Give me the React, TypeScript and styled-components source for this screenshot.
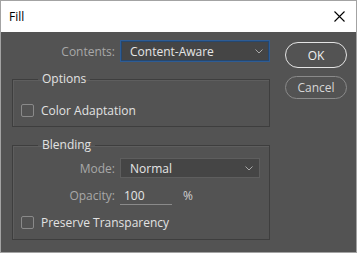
import styled, { createGlobalStyle } from 'styled-components';

const GlobalStyle = createGlobalStyle`
  html, body {
    margin: 0;
    padding: 0;
    background: #ffffff;
  }
  * {
    box-sizing: border-box;
  }
`;

const Window = styled.div`
  width: 357px;
  height: 253px;
  border: 1px solid #a3a3a3;
  display: flex;
  flex-direction: column;
  font-family: 'Open Sans', 'Noto Sans', sans-serif;
  font-size: 12px;
  overflow: hidden;
`;

const TitleBar = styled.div`
  height: 31px;
  flex: none;
  background: #ffffff;
  display: flex;
  align-items: center;
  justify-content: space-between;
  padding: 0 10px 0 8px;
`;

const Title = styled.span`
  font-size: 12px;
  color: #000000;
`;

const CloseButton = styled.button`
  width: 14px;
  height: 14px;
  padding: 0;
  border: none;
  background: transparent;
  display: flex;
  align-items: center;
  justify-content: center;
`;

const Body = styled.div`
  flex: 1;
  background: #535353;
  display: flex;
  padding: 8px 0 0 11px;
  gap: 15px;
`;

const MainColumn = styled.div`
  width: 258px;
  display: flex;
  flex-direction: column;
`;

const ButtonColumn = styled.div`
  width: 62px;
  padding-top: 2px;
  display: flex;
  flex-direction: column;
  gap: 8px;
`;

const DialogButton = styled.button<{ $primary?: boolean }>`
  border-radius: 13px;
  background: transparent;
  border: ${({ $primary }) => ($primary ? '1.5px solid #e4e4e4' : '1px solid #8a8a8a')};
  color: ${({ $primary }) => ($primary ? '#f0f0f0' : '#d6d6d6')};
  font-family: inherit;
  font-size: 12px;
  padding: 0;
  height: ${({ $primary }) => ($primary ? '26px' : '23px')};
`;

const Row = styled.div<{ $height: number; $top?: number }>`
  display: flex;
  align-items: center;
  height: ${({ $height }) => $height}px;
  margin-top: ${({ $top = 0 }) => $top}px;
`;

const Label = styled.span<{ $width: number }>`
  width: ${({ $width }) => $width}px;
  text-align: right;
  color: #a8a8a8;
  font-size: 12px;
  padding-right: 5px;
  flex: none;
`;

const Select = styled.div<{ $width: number; $focused?: boolean }>`
  width: ${({ $width }) => $width}px;
  height: 100%;
  background: #454545;
  border: 1px solid ${({ $focused }) => ($focused ? '#2e5c94' : '#5e5e5e')};
  box-shadow: ${({ $focused }) => ($focused ? 'inset 0 0 0 1px #26476e' : 'none')};
  display: flex;
  align-items: center;
  justify-content: space-between;
  padding: 0 6px 0 9px;
  color: #e6e6e6;
  font-size: 12px;
`;

const Group = styled.fieldset<{ $height: number; $top: number }>`
  margin: ${({ $top }) => $top}px 0 0;
  height: ${({ $height }) => $height}px;
  border: 1px solid #3e3e3e;
  box-shadow: 1px 1px 0 #5e5e5e inset;
  padding: 0 0 0 8px;
  display: flex;
  flex-direction: column;
`;

const Legend = styled.legend`
  color: #e2e2e2;
  font-size: 12px;
  line-height: 16px;
  padding: 0 4px;
  margin-left: 17px;
`;

const CheckRow = styled.label`
  display: flex;
  align-items: center;
  gap: 7px;
  color: #e2e2e2;
  font-size: 12px;
`;

const Box = styled.span`
  width: 13px;
  height: 13px;
  border: 1px solid #8a8a8a;
  border-radius: 2px;
  flex: none;
`;

const NumberField = styled.div`
  width: 52px;
  height: 100%;
  border-bottom: 1px solid #8a8a8a;
  color: #e6e6e6;
  font-size: 12px;
  display: flex;
  align-items: center;
  padding: 2px 0 0 4px;
`;

const Unit = styled.span`
  color: #cfcfcf;
  font-size: 12px;
  margin-left: 11px;
`;

const Chevron = () => (
  <svg width="8" height="5" viewBox="0 0 8 5">
    <path d="M0.5 0.5 L4 4 L7.5 0.5" fill="none" stroke="#a8a8a8" strokeWidth="1" />
  </svg>
);

export default function App() {
  return (
    <>
      <GlobalStyle />
      <Window>
        <TitleBar>
          <Title>Fill</Title>
          <CloseButton aria-label="Close">
            <svg width="11" height="11" viewBox="0 0 11 11">
              <path d="M0.5 0.5 L10.5 10.5 M10.5 0.5 L0.5 10.5" stroke="#000" strokeWidth="1.1" />
            </svg>
          </CloseButton>
        </TitleBar>
        <Body>
          <MainColumn>
            <Row $height={22}>
              <Label $width={108}>Contents:</Label>
              <Select $width={150} $focused>
                Content-Aware
                <Chevron />
              </Select>
            </Row>
            <Group $height={56} $top={9}>
              <Legend>Options</Legend>
              <Row $height={20} $top={13}>
                <CheckRow>
                  <Box />
                  Color Adaptation
                </CheckRow>
              </Row>
            </Group>
            <Group $height={103} $top={10}>
              <Legend>Blending</Legend>
              <Row $height={20} $top={5}>
                <Label $width={99}>Mode:</Label>
                <Select $width={140}>
                  Normal
                  <Chevron />
                </Select>
              </Row>
              <Row $height={20} $top={7}>
                <Label $width={99}>Opacity:</Label>
                <NumberField>100</NumberField>
                <Unit>%</Unit>
              </Row>
              <Row $height={20} $top={7}>
                <CheckRow>
                  <Box />
                  Preserve Transparency
                </CheckRow>
              </Row>
            </Group>
          </MainColumn>
          <ButtonColumn>
            <DialogButton $primary>OK</DialogButton>
            <DialogButton>Cancel</DialogButton>
          </ButtonColumn>
        </Body>
      </Window>
    </>
  );
}
